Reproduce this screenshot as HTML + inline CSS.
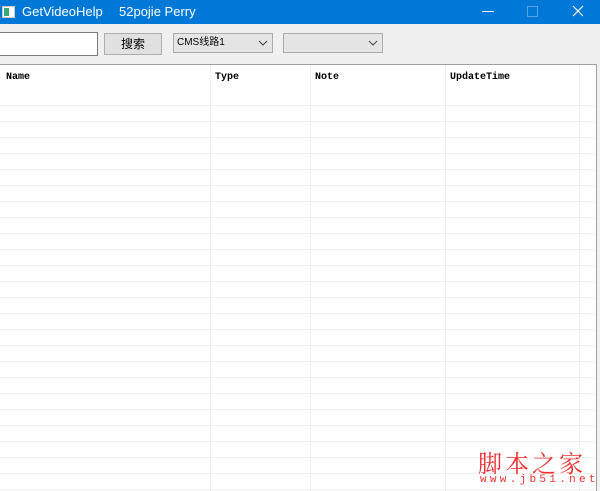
<!DOCTYPE html>
<html><head><meta charset="utf-8"><style>
html,body{margin:0;width:600px;height:491px;overflow:hidden}
body{background:#f0f0f0;font-family:"Liberation Sans","Noto Sans CJK SC",sans-serif;position:relative}
.tb{position:absolute;left:0;top:0;width:600px;height:24px;background:#0078d7;color:#fff;font-size:13px}
.abs{position:absolute}
.grid{position:absolute;left:0;top:64px;width:597px;height:427px;box-sizing:border-box;background:#fff;border-top:1px solid #a0a0a0;border-right:1px solid #a0a0a0;
background-image:repeating-linear-gradient(to bottom,transparent 0,transparent 15px,#f0f0f0 15px,#f0f0f0 16px);background-position:0 25px;background-repeat:repeat-y;background-size:100% 16px}
.hdr{position:absolute;top:0;height:25px;left:0;width:596px;background:#fff}
.col{position:absolute;top:0;bottom:0;width:1px;background:#f0f0f0}
.h{position:absolute;top:7px;font-family:"Liberation Mono","Noto Serif CJK SC",monospace;font-size:10px;color:#000;font-weight:bold}
.wm{position:absolute;color:#f03030;white-space:nowrap}
</style></head><body>
<div class="tb">
<div class="abs" style="left:2px;top:6px;width:11px;height:10px;background:#fff;border:1px solid #ccc"><div style="position:absolute;left:1px;top:1px;width:5px;height:8px;background:#3a7"></div></div>
<div class="abs" style="left:22px;top:4px">GetVideoHelp</div>
<div class="abs" style="left:119px;top:4px">52pojie Perry</div>
<div class="abs" style="left:482px;top:11px;width:12px;height:1px;background:#fff"></div>
<div class="abs" style="left:527px;top:6px;width:9px;height:9px;border:1px solid #5aa0e0"></div>
<svg class="abs" style="left:572px;top:5px" width="12" height="12"><path d="M1 1L11 11M11 1L1 11" stroke="#fff" stroke-width="1.2"/></svg>
</div>
<div class="abs" style="left:-1px;top:32px;width:97px;height:22px;background:#fff;border:1px solid #7a7a7a"></div>
<div class="abs" style="left:104px;top:33px;width:56px;height:20px;background:#e1e1e1;border:1px solid #adadad;font-size:12px;text-align:center;line-height:20px">搜索</div>
<div class="abs" style="left:173px;top:33px;font-size:10px;line-height:18px;padding-left:3px;box-sizing:border-box;width:100px;height:20px;background:#e5e5e5;border:1px solid #acacac">CMS线路1</div>
<svg class="abs" style="left:258px;top:40px" width="10" height="6"><path d="M1 1L5 5L9 1" stroke="#444" fill="none"/></svg>
<div class="abs" style="left:283px;top:33px;width:100px;height:20px;box-sizing:border-box;background:#e5e5e5;border:1px solid #acacac"></div>
<svg class="abs" style="left:368px;top:40px" width="10" height="6"><path d="M1 1L5 5L9 1" stroke="#444" fill="none"/></svg>
<div class="grid">
<div class="hdr"></div>
<div class="col" style="left:210px"></div><div class="col" style="left:310px"></div><div class="col" style="left:445px"></div><div class="col" style="left:579px"></div>
<div class="h" style="left:6px">Name</div><div class="h" style="left:215px">Type</div><div class="h" style="left:315px">Note</div><div class="h" style="left:450px">UpdateTime</div>
</div>
<div class="wm" style="left:478px;top:444px;font-size:24px;letter-spacing:3px;font-family:'Noto Serif CJK SC',serif">脚本之家</div>
<div class="wm" style="left:480px;top:474px;font-size:11px;letter-spacing:3.3px;font-family:'Liberation Mono',monospace">www.jb51.net</div>
</body></html>
